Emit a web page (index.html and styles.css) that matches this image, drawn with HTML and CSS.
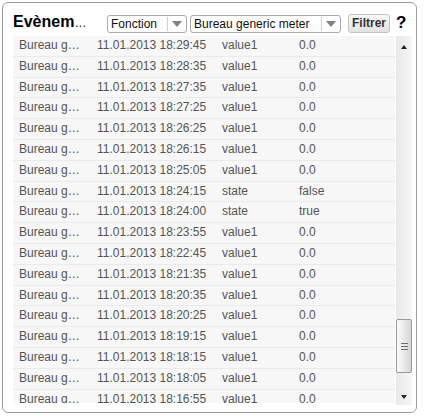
FILE: index.html
```html
<!DOCTYPE html>
<html lang="fr">
<head>
<meta charset="utf-8">
<title>Evènements</title>
<link rel="stylesheet" href="styles.css">
</head>
<body>
<div class="panel">
  <div class="header">
    <h1 class="title">Evènem<span class="ell">…</span></h1>
    <div class="select s1"><span class="val">Fonction</span><span class="arrow"></span></div>
    <div class="select s2"><span class="val">Bureau generic meter</span><span class="arrow"></span></div>
    <button class="btn">Filtrer</button>
    <span class="help">?</span>
  </div>
  <div class="list">
    <div class="rows">
      <div class="row"><span class="c">Bureau g…</span><span class="c">11.01.2013 18:29:45</span><span class="c">value1</span><span class="c">0.0</span></div>
      <div class="row"><span class="c">Bureau g…</span><span class="c">11.01.2013 18:28:35</span><span class="c">value1</span><span class="c">0.0</span></div>
      <div class="row"><span class="c">Bureau g…</span><span class="c">11.01.2013 18:27:35</span><span class="c">value1</span><span class="c">0.0</span></div>
      <div class="row"><span class="c">Bureau g…</span><span class="c">11.01.2013 18:27:25</span><span class="c">value1</span><span class="c">0.0</span></div>
      <div class="row"><span class="c">Bureau g…</span><span class="c">11.01.2013 18:26:25</span><span class="c">value1</span><span class="c">0.0</span></div>
      <div class="row"><span class="c">Bureau g…</span><span class="c">11.01.2013 18:26:15</span><span class="c">value1</span><span class="c">0.0</span></div>
      <div class="row"><span class="c">Bureau g…</span><span class="c">11.01.2013 18:25:05</span><span class="c">value1</span><span class="c">0.0</span></div>
      <div class="row"><span class="c">Bureau g…</span><span class="c">11.01.2013 18:24:15</span><span class="c">state</span><span class="c">false</span></div>
      <div class="row"><span class="c">Bureau g…</span><span class="c">11.01.2013 18:24:00</span><span class="c">state</span><span class="c">true</span></div>
      <div class="row"><span class="c">Bureau g…</span><span class="c">11.01.2013 18:23:55</span><span class="c">value1</span><span class="c">0.0</span></div>
      <div class="row"><span class="c">Bureau g…</span><span class="c">11.01.2013 18:22:45</span><span class="c">value1</span><span class="c">0.0</span></div>
      <div class="row"><span class="c">Bureau g…</span><span class="c">11.01.2013 18:21:35</span><span class="c">value1</span><span class="c">0.0</span></div>
      <div class="row"><span class="c">Bureau g…</span><span class="c">11.01.2013 18:20:35</span><span class="c">value1</span><span class="c">0.0</span></div>
      <div class="row"><span class="c">Bureau g…</span><span class="c">11.01.2013 18:20:25</span><span class="c">value1</span><span class="c">0.0</span></div>
      <div class="row"><span class="c">Bureau g…</span><span class="c">11.01.2013 18:19:15</span><span class="c">value1</span><span class="c">0.0</span></div>
      <div class="row"><span class="c">Bureau g…</span><span class="c">11.01.2013 18:18:15</span><span class="c">value1</span><span class="c">0.0</span></div>
      <div class="row"><span class="c">Bureau g…</span><span class="c">11.01.2013 18:18:05</span><span class="c">value1</span><span class="c">0.0</span></div>
      <div class="row"><span class="c">Bureau g…</span><span class="c">11.01.2013 18:16:55</span><span class="c">value1</span><span class="c">0.0</span></div>
    </div>
    <div class="scrollbar">
      <div class="sb-btn"><span class="tri-up"></span></div>
      <div class="track"><div class="thumb"><span class="grip"></span><span class="grip"></span><span class="grip"></span></div></div>
      <div class="sb-btn"><span class="tri-down"></span></div>
    </div>
  </div>
</div>
</body>
</html>
```

FILE: styles.css
```css
* { box-sizing: border-box; }
html, body { margin: 0; padding: 0; background: #fff; }
body { font-family: "Liberation Sans", Arial, sans-serif; }

.panel {
  margin: 2px;
  width: 415px;
  height: 411px;
  border: 1px solid #9c9c9c;
  border-radius: 6px;
  padding: 0 4px 7px 10px;
  display: flex;
  flex-direction: column;
  background: #fff;
}

.header {
  height: 33px;
  padding-top: 9px;
  padding-bottom: 1px;
  display: flex;
  align-items: center;
  flex-shrink: 0;
}

.title {
  margin: 0 14px 2px 0;
  width: 80px;
  font-size: 16px;
  font-weight: bold;
  line-height: 20px;
  color: #000;
  white-space: nowrap;
}
.title .ell {
  font-size: 12px;
  font-weight: normal;
  color: #222;
}

.select {
  height: 18px;
  border: 1px solid #a9a9a9;
  border-radius: 3px;
  background: #fff;
  display: flex;
  align-items: stretch;
  font-size: 12px;
  color: #111;
}
.s1 { width: 80px; }
.s2 { width: 151px; margin-left: 3px; }
.select .val {
  flex: 1;
  padding-left: 3px;
  line-height: 16px;
  white-space: nowrap;
  overflow: hidden;
}
.select .arrow {
  width: 19px;
  border-left: 1px solid #cfcfcf;
  margin: 1px 0;
  display: flex;
  align-items: center;
  justify-content: center;
}
.select .arrow::before {
  content: "";
  width: 0;
  height: 0;
  border-left: 5px solid transparent;
  border-right: 5px solid transparent;
  border-top: 6px solid #808080;
}

.btn {
  margin-left: 7px;
  height: 19px;
  padding: 0 3px;
  border: 1px solid #c2c2c2;
  border-radius: 3px;
  background: linear-gradient(#f8f8f8, #e2e2e2);
  font-family: "Liberation Sans", Arial, sans-serif;
  font-size: 12px;
  font-weight: bold;
  color: #333;
  line-height: 17px;
}

.help {
  margin: 0 0 2px 6px;
  font-size: 17px;
  font-weight: bold;
  line-height: 20px;
  color: #000;
}

.list {
  height: 369px;
  display: flex;
  align-items: flex-start;
}

.rows {
  width: 382px;
  height: 367px;
  overflow: hidden;
  flex-shrink: 0;
}

.row {
  height: 20.8px;
  display: grid;
  grid-template-columns: 78px 125px 77px 1fr;
  background: #f7f7f7;
  border-bottom: 1px solid #ebebeb;
  font-size: 12px;
  line-height: 19.8px;
  color: #555;
}
.c {
  padding: 0 6px;
  white-space: nowrap;
}

.scrollbar {
  width: 16px;
  height: 369px;
  margin-left: 1px;
  display: flex;
  flex-direction: column;
  background: linear-gradient(to right, #e9e9e9, #f1f1f1 70%, #f7f7f7);
}
.sb-btn {
  height: 17px;
  display: flex;
  align-items: center;
  justify-content: center;
  flex-shrink: 0;
}
.tri-up, .tri-down {
  width: 0;
  height: 0;
  border-left: 3.5px solid transparent;
  border-right: 3.5px solid transparent;
}
.tri-up { border-bottom: 4px solid #222; margin-top: 4px; }
.tri-down { border-top: 4px solid #222; margin-top: 1px; }

.track {
  flex: 1;
  display: flex;
  flex-direction: column;
  justify-content: flex-end;
  padding-bottom: 15px;
}
.thumb {
  height: 54px;
  width: 16px;
  border: 1px solid #9a9a9a;
  border-radius: 2px;
  background: linear-gradient(to right, #fbfbfb, #e6e6e6 60%, #d4d4d4);
  display: flex;
  flex-direction: column;
  align-items: center;
  justify-content: center;
  gap: 2px;
}
.grip {
  width: 7px;
  height: 1px;
  background: #6e6e6e;
}
```
